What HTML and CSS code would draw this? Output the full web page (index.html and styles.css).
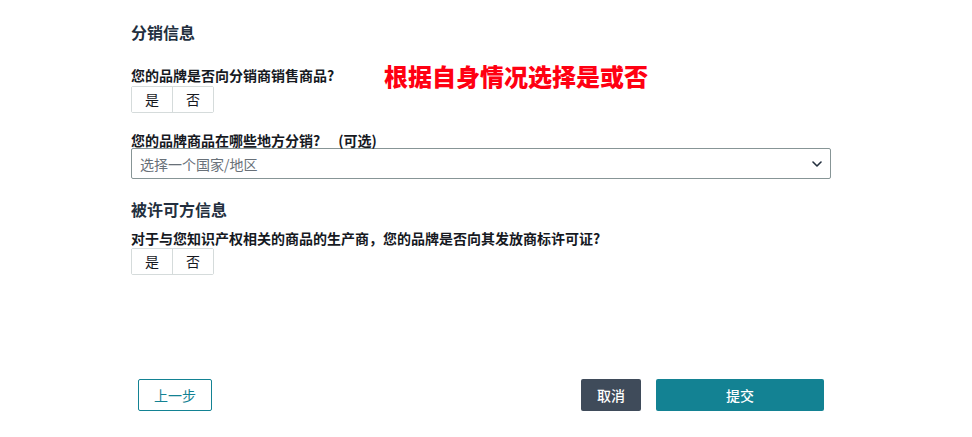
FILE: index.html
```html
<!DOCTYPE html>
<html lang="zh-CN">
<head>
<meta charset="utf-8">
<title>分销信息</title>
<link rel="stylesheet" href="styles.css">
</head>
<body>
<main class="form">
  <section class="section section-dist">
    <h2 class="section-title">分销信息</h2>
    <div class="field field-first">
      <div class="label">您的品牌是否向分销商销售商品?</div>
      <div class="seg">
        <button class="seg-btn" type="button">是</button>
        <button class="seg-btn" type="button">否</button>
      </div>
    </div>
    <div class="field field-select">
      <div class="label">您的品牌商品在哪些地方分销?<span class="optional">(可选)</span></div>
      <div class="select">
        <span class="placeholder">选择一个国家/地区</span>
        <svg class="chevron" width="10" height="6" viewBox="0 0 10 6" aria-hidden="true">
          <path d="M1 1 L5 5 L9 1" fill="none" stroke="#232f3e" stroke-width="1.6" stroke-linecap="round" stroke-linejoin="round"/>
        </svg>
      </div>
    </div>
    <span class="annotation">根据自身情况选择是或否</span>
  </section>

  <section class="section section-license">
    <h2 class="section-title">被许可方信息</h2>
    <div class="field field-license">
      <div class="label">对于与您知识产权相关的商品的生产商，您的品牌是否向其发放商标许可证?</div>
      <div class="seg">
        <button class="seg-btn" type="button">是</button>
        <button class="seg-btn" type="button">否</button>
      </div>
    </div>
  </section>

  <footer class="actions">
    <button class="btn btn-back" type="button">上一步</button>
    <div class="actions-right">
      <button class="btn btn-cancel" type="button">取消</button>
      <button class="btn btn-submit" type="button">提交</button>
    </div>
  </footer>
</main>
</body>
</html>
```

FILE: styles.css
```css
* {
  box-sizing: border-box;
}

html, body {
  margin: 0;
  padding: 0;
  background: #ffffff;
}

body {
  font-family: "Noto Sans CJK SC", "Noto Sans", "Liberation Sans", sans-serif;
  color: #16191f;
  font-size: 14px;
}

.form {
  width: 700px;
  margin-left: 131px;
  padding-top: 20px;
}

.section {
  position: relative;
}

.section-title {
  margin: 0;
  font-size: 16px;
  line-height: 24px;
  font-weight: 700;
  color: #232f3e;
}

.field-first {
  margin-top: 23px;
}

.field-select {
  margin-top: 19px;
}

.section-license {
  margin-top: 18px;
}

.field-license {
  margin-top: 9px;
}

.label {
  font-size: 14px;
  line-height: 16px;
  font-weight: 700;
  color: #16191f;
  white-space: nowrap;
}

.optional {
  margin-left: 18px;
}

.field-first .label {
  margin-bottom: 3px;
}

.field-license .label {
  margin-bottom: 2px;
}

.seg {
  display: flex;
  width: 83px;
  height: 27px;
  border: 1px solid #d5dbdb;
  border-radius: 2px;
}

.seg-btn {
  flex: 1;
  margin: 0;
  padding: 0;
  border: none;
  background: #ffffff;
  font-family: inherit;
  font-size: 14px;
  color: #16191f;
  line-height: 25px;
}

.seg-btn + .seg-btn {
  border-left: 1px solid #d5dbdb;
}

.select {
  display: flex;
  align-items: center;
  justify-content: space-between;
  height: 31px;
  padding: 0 8px 0 8px;
  border: 1px solid #879596;
  border-radius: 2px;
}

.placeholder {
  font-size: 14px;
  color: #687078;
}

.chevron {
  display: block;
  margin-top: 1px;
}

.annotation {
  position: absolute;
  left: 253px;
  top: 44px;
  font-size: 24px;
  line-height: 24px;
  font-weight: 900;
  color: #ff0012;
  white-space: nowrap;
}

.actions {
  display: flex;
  justify-content: space-between;
  align-items: center;
  margin-top: 104px;
  padding: 0 7px;
}

.actions-right {
  display: flex;
  gap: 15px;
}

.btn {
  height: 32px;
  margin: 0;
  padding: 0;
  border-radius: 2px;
  font-family: inherit;
  font-size: 14px;
  font-weight: 500;
  cursor: pointer;
}

.btn-back {
  width: 74px;
  background: #ffffff;
  border: 1px solid #138293;
  color: #138293;
  font-weight: 400;
}

.btn-cancel {
  width: 60px;
  background: #3f4b5a;
  border: none;
  color: #ffffff;
}

.btn-submit {
  width: 168px;
  background: #138293;
  border: none;
  color: #ffffff;
}
```
